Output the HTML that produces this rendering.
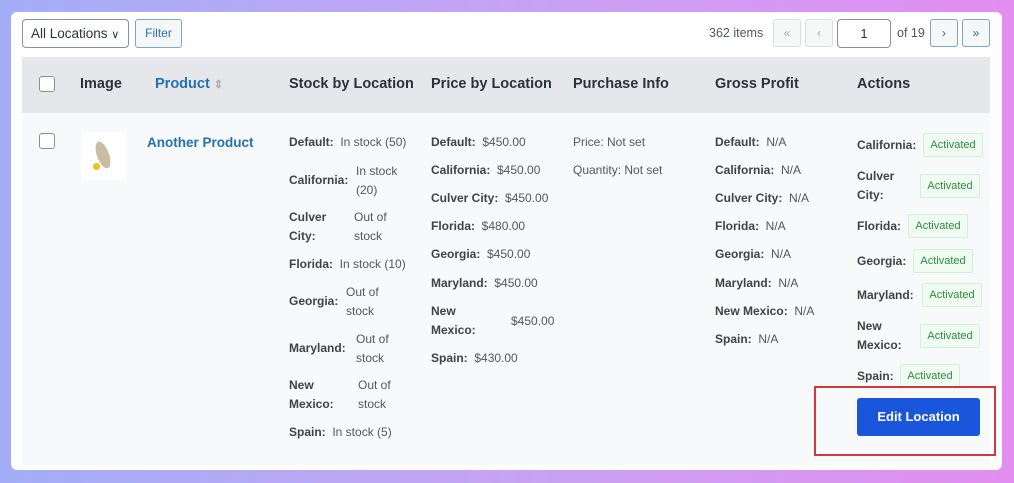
<!DOCTYPE html><html><head><style>
*{margin:0;padding:0;box-sizing:border-box}
body{width:1014px;height:483px;overflow:hidden;background:linear-gradient(90deg,#a3aef7 0%,#c6a3f3 50%,#e38ef0 100%);font-family:"Liberation Sans",sans-serif;position:relative;color:#50575e}
.card{position:absolute;left:11px;top:12px;width:991px;height:458px;background:#fff;border-radius:6px}
.a{position:absolute;font-size:12px;white-space:nowrap;line-height:19px}
.b{font-weight:bold;color:#3c434a}
b{color:#3c434a}
.h{position:absolute;top:76px;font-size:14.5px;font-weight:bold;color:#2c3338}
.badge{position:absolute;height:24px;border:1px solid #d3f0d8;background:#f0fbf2;color:#2e8a43;font-size:11px;line-height:22px;text-align:center;width:60px;border-radius:2px}
.pg{position:absolute;top:19px;height:28px;width:28px;border:1px solid #dcdcde;background:#f6f7f7;color:#a7aaad;font-size:12px;text-align:center;line-height:26px;border-radius:3px}
.cb{position:absolute;width:16px;height:16px;border:1px solid #8c8f94;border-radius:3px;background:#fff}
</style></head><body>
<div class="card"></div>
<div style="position:absolute;left:22px;top:19px;width:107px;height:29px;border:1px solid #8c8f94;border-radius:4px;font-size:13.5px;line-height:27px;padding-left:8px;color:#2c3338">All Locations <span style="font-size:11px">&#8744;</span></div>
<div style="position:absolute;left:135px;top:19px;width:47px;height:29px;border:1px solid #7aa7c9;border-radius:3px;background:#f6f7f7;color:#2271b1;font-size:12px;line-height:27px;text-align:center">Filter</div>
<div class="a" style="left:709px;top:24px;font-size:12.5px">362 items</div>
<div class="pg" style="left:773px">«</div><div class="pg" style="left:805px">‹</div>
<div style="position:absolute;left:837px;top:19px;width:54px;height:29px;border:1px solid #8c8f94;border-radius:4px;text-align:center;line-height:27px;font-size:13px;color:#2c3338">1</div>
<div class="a" style="left:897px;top:24px;font-size:12.5px">of 19</div>
<div class="pg" style="left:930px;border-color:#7aa7c9;color:#2271b1">›</div><div class="pg" style="left:962px;border-color:#7aa7c9;color:#2271b1">»</div>
<div style="position:absolute;left:22px;top:57px;width:968px;height:56px;background:#e5e7eb"></div>
<div style="position:absolute;left:22px;top:113px;width:968px;height:352px;background:#f8f9fb"></div>
<div class="cb" style="left:39px;top:76px"></div><div class="cb" style="left:39px;top:133px"></div>
<div class="h" style="left:80px">Image</div>
<div class="h" style="left:155px;color:#2271b1">Product <span style="color:#a7aaad;font-size:11px">&#8661;</span></div>
<div class="h" style="left:289px">Stock by Location</div>
<div class="h" style="left:431px">Price by Location</div>
<div class="h" style="left:573px">Purchase Info</div>
<div class="h" style="left:715px">Gross Profit</div>
<div class="h" style="left:857px">Actions</div>
<div style="position:absolute;left:81px;top:133px;width:46px;height:46px;background:#fff"><div style="position:absolute;left:16px;top:8px;width:12px;height:28px;background:#c9bca3;border-radius:50%;transform:rotate(-20deg)"></div><div style="position:absolute;left:12px;top:30px;width:7px;height:7px;background:#f0c020;border-radius:50%"></div></div>
<div class="a" style="left:147px;top:133px;font-size:13.5px;font-weight:bold;color:#2271b1">Another Product</div>
<div class="a" style="left:289px;top:133px"><b>Default:</b>&nbsp; In stock (50)</div>
<div class="a b" style="left:289px;top:171px">California:</div><div class="a" style="left:356px;top:162px">In stock<br>(20)</div>
<div class="a b" style="left:289px;top:208px">Culver<br>City:</div><div class="a" style="left:354px;top:208px">Out of<br>stock</div>
<div class="a" style="left:289px;top:255px"><b>Florida:</b>&nbsp; In stock (10)</div>
<div class="a b" style="left:289px;top:292px">Georgia:</div><div class="a" style="left:346px;top:283px">Out of<br>stock</div>
<div class="a b" style="left:289px;top:339px">Maryland:</div><div class="a" style="left:356px;top:330px">Out of<br>stock</div>
<div class="a b" style="left:289px;top:376px">New<br>Mexico:</div><div class="a" style="left:358px;top:376px">Out of<br>stock</div>
<div class="a" style="left:289px;top:423px"><b>Spain:</b>&nbsp; In stock (5)</div>
<div class="a" style="left:431px;top:133px"><b>Default:</b>&nbsp; $450.00</div>
<div class="a" style="left:431px;top:161px"><b>California:</b>&nbsp; $450.00</div>
<div class="a" style="left:431px;top:189px"><b>Culver City:</b>&nbsp; $450.00</div>
<div class="a" style="left:431px;top:217px"><b>Florida:</b>&nbsp; $480.00</div>
<div class="a" style="left:431px;top:245px"><b>Georgia:</b>&nbsp; $450.00</div>
<div class="a" style="left:431px;top:274px"><b>Maryland:</b>&nbsp; $450.00</div>
<div class="a b" style="left:431px;top:302px">New<br>Mexico:</div><div class="a" style="left:511px;top:312px">$450.00</div>
<div class="a" style="left:431px;top:349px"><b>Spain:</b>&nbsp; $430.00</div>
<div class="a" style="left:573px;top:133px">Price: Not set</div>
<div class="a" style="left:573px;top:161px">Quantity: Not set</div>
<div class="a" style="left:715px;top:133px"><b>Default:</b>&nbsp; N/A</div>
<div class="a" style="left:715px;top:161px"><b>California:</b>&nbsp; N/A</div>
<div class="a" style="left:715px;top:189px"><b>Culver City:</b>&nbsp; N/A</div>
<div class="a" style="left:715px;top:217px"><b>Florida:</b>&nbsp; N/A</div>
<div class="a" style="left:715px;top:245px"><b>Georgia:</b>&nbsp; N/A</div>
<div class="a" style="left:715px;top:274px"><b>Maryland:</b>&nbsp; N/A</div>
<div class="a" style="left:715px;top:302px"><b>New Mexico:</b>&nbsp; N/A</div>
<div class="a" style="left:715px;top:330px"><b>Spain:</b>&nbsp; N/A</div>
<div class="a b" style="left:857px;top:136px">California:</div><div class="badge" style="left:923px;top:133px">Activated</div>
<div class="a b" style="left:857px;top:167px">Culver<br>City:</div><div class="badge" style="left:920px;top:174px">Activated</div>
<div class="a b" style="left:857px;top:217px">Florida:</div><div class="badge" style="left:908px;top:214px">Activated</div>
<div class="a b" style="left:857px;top:252px">Georgia:</div><div class="badge" style="left:913px;top:249px">Activated</div>
<div class="a b" style="left:857px;top:286px">Maryland:</div><div class="badge" style="left:922px;top:283px">Activated</div>
<div class="a b" style="left:857px;top:317px">New<br>Mexico:</div><div class="badge" style="left:920px;top:324px">Activated</div>
<div class="a b" style="left:857px;top:367px">Spain:</div><div class="badge" style="left:900px;top:364px">Activated</div>
<div style="position:absolute;left:857px;top:398px;width:123px;height:38px;background:#1a56db;border-radius:3px;color:#fff;font-weight:bold;font-size:13px;text-align:center;line-height:38px">Edit Location</div>
<div style="position:absolute;left:814px;top:386px;width:182px;height:70px;border:2px solid #d03a3a"></div>
</body></html>
